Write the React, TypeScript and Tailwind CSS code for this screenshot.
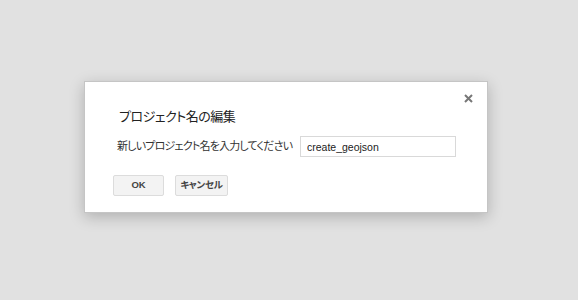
export default function App() {
  const jp = "font-['Arial','Liberation_Sans','Noto_Sans_CJK_JP',sans-serif] [font-feature-settings:'palt']"
  return (
    <div className={`w-[578px] h-[300px] bg-[#e1e1e1] pt-[81px] pl-[84px] ${jp}`}>
      <div className="relative w-[404px] h-[132px] bg-white border border-[#c5c5c5] shadow-[0_4px_14px_rgba(0,0,0,0.22)] pl-[28px] pt-[26px]">
        {/* close */}
        <button className="absolute right-[14px] top-[11px] w-[10px] h-[10px] flex items-center justify-center">
          <svg width="9" height="9" viewBox="0 0 9 9">
            <path d="M1 1L8 8M8 1L1 8" stroke="#777" strokeWidth="2" />
          </svg>
        </button>

        <h2 className="ml-[6px] text-[13px] leading-[18px] tracking-[-0.5px] text-[#222] font-normal whitespace-nowrap">
          プロジェクト名の編集
        </h2>

        <div className="mt-[10px] flex items-center">
          <span className="ml-[4px] w-[183px] text-[11px] tracking-[-0.8px] text-[#333] whitespace-nowrap">
            新しいプロジェクト名を入力してください
          </span>
          <input
            readOnly
            value="create_geojson"
            className="shrink-0 w-[156px] h-[21px] border border-[#d9d9d9] px-[6px] text-[10.5px] text-[#222] outline-none"
          />
        </div>

        <div className="mt-[18px] flex gap-[11px]">
          <button className="w-[51px] h-[21px] rounded-[2px] border border-[#dcdcdc] bg-[#f3f3f3] text-[9.5px] font-bold text-[#444]">
            OK
          </button>
          <button className="w-[53px] h-[21px] rounded-[2px] border border-[#dcdcdc] bg-[#f3f3f3] text-[9.5px] font-bold tracking-[-0.3px] text-[#444]">
            キャンセル
          </button>
        </div>
      </div>
    </div>
  )
}
